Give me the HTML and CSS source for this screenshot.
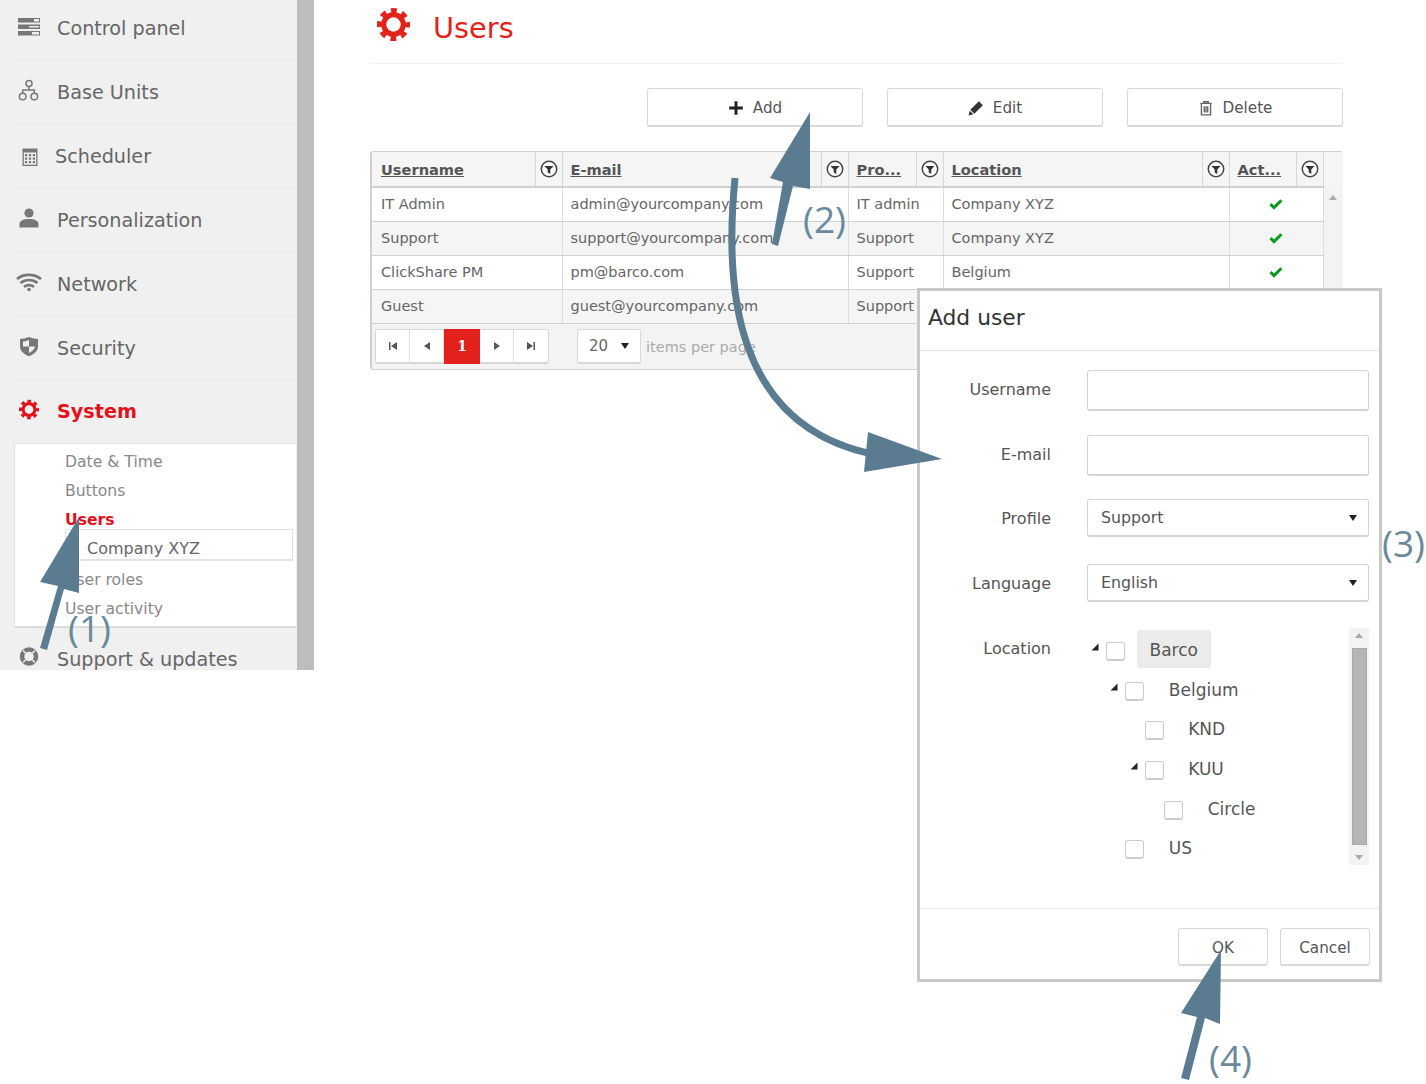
FILE: index.html
```html
<!DOCTYPE html>
<html lang="en">
<head>
  <meta charset="UTF-8">
  <title>Users</title>
  <link rel="stylesheet" href="styles.css">
</head>
<body>
  <svg class="defs" width="0" height="0">
    <symbol id="gear" viewBox="0 0 32 32">
      <circle cx="16" cy="16" r="9.500" fill="none" stroke="currentColor" stroke-width="5"/>
      <circle cx="16" cy="16" r="13.500" fill="none" stroke="currentColor" stroke-width="5" stroke-dasharray="5.600 5" stroke-dashoffset="2.800"/>
    </symbol>
    <symbol id="funnel" viewBox="0 0 18 18">
      <circle cx="9" cy="9" r="7.700" fill="#fff" stroke="#444" stroke-width="1.500"/>
      <path d="M4.400 6h9.200L10.300 9.600V14L7.700 12.400V9.600z" fill="#333"/>
    </symbol>
    <symbol id="check" viewBox="0 0 14 12">
      <path d="M1.500 6.200L5 9.600 12.400 2.200" fill="none" stroke="#0a9a1e" stroke-width="3"/>
    </symbol>
    <symbol id="twist" viewBox="0 0 8 8">
      <path d="M7.500 0.500V7.500H0.500z" fill="#222"/>
    </symbol>
  </svg>

  <div class="page">
    <aside class="sidebar">
      <nav class="nav">
        <a class="nav-item">
          <svg class="nav-icon" viewBox="0 0 27 22"><path d="M4 1h22v4.500H4zM4 7.500h22V12H4zM4 14h22v4.500H4z" fill="#777"/><path d="M20 2h5v2.500h-5zM15 9h10v1.500H15zM18 15h7v2.500h-7z" fill="#eee"/></svg>
          <span>Control panel</span>
        </a>
        <a class="nav-item">
          <svg class="nav-icon" viewBox="0 0 27 22" fill="none" stroke="#777" stroke-width="1.500"><circle cx="15" cy="2.500" r="3"/><circle cx="8.700" cy="15.500" r="3.300"/><circle cx="20.300" cy="15.500" r="3.300"/><path d="M15 5.500v3.500M8.700 12.200V9h11.600v3.200"/></svg>
          <span>Base Units</span>
        </a>
        <a class="nav-item nav-item-tight">
          <svg class="nav-icon" viewBox="0 0 27 22" fill="#777"><path fill-rule="evenodd" d="M8.500 3.500h15V21h-15zM9.800 7.500v12.200h12.400V7.500z"/><path d="M11 9h2.200v2.200H11zM14.900 9h2.200v2.200h-2.200zM18.800 9H21v2.200h-2.200zM11 12.500h2.200v2.200H11zM14.900 12.500h2.200v2.200h-2.200zM18.800 12.500H21v2.200h-2.200zM11 16h2.200v2.200H11zM14.900 16h2.200v2.200h-2.200zM18.800 16H21v2.200h-2.200z"/></svg>
          <span>Scheduler</span>
        </a>
        <a class="nav-item">
          <svg class="nav-icon" viewBox="0 0 27 22" fill="#777"><circle cx="15" cy="4" r="4.600"/><path d="M5.500 18.500v-3.500c0-3 3.500-5 9.500-5s9.500 2 9.500 5v3.500z"/></svg>
          <span>Personalization</span>
        </a>
        <a class="nav-item">
          <svg class="nav-icon" viewBox="0 0 27 22" fill="none" stroke="#777" stroke-width="2.700"><path d="M3 6c6.500-5.500 17-5.500 24 0M6.500 10c5-4 12-4 17 0M10 13.800c3-2 7-2 10 0"/><circle cx="15" cy="16.500" r="1.800" fill="#777" stroke="none"/></svg>
          <span>Network</span>
        </a>
        <a class="nav-item">
          <svg class="nav-icon" viewBox="0 0 27 22"><path d="M15 0c3 1.200 6 2 9 2v7.500c0 4.500-4 7.800-9 9.800-5-2-9-5.300-9-9.800V2c3 0 6-.8 9-2z" fill="#777"/><path d="M15 3v6.500h6c-.5 3-3 5-6 6.500V9.500H9V4.500c2 0 4-.7 6-1.500z" fill="#eee"/></svg>
          <span>Security</span>
        </a>
        <a class="nav-item nav-item-active">
          <svg class="nav-icon nav-icon-gear" viewBox="0 0 27 22"><use href="#gear" x="5" y="-1.500" width="20" height="20"/></svg>
          <span>System</span>
        </a>
        <div class="subnav">
          <a class="subnav-item">Date &amp; Time</a>
          <a class="subnav-item">Buttons</a>
          <a class="subnav-item subnav-item-active">Users</a>
          <div class="subnav-select">Company XYZ</div>
          <a class="subnav-item">User roles</a>
          <a class="subnav-item">User activity</a>
        </div>
        <a class="nav-item nav-item-last">
          <svg class="nav-icon" viewBox="0 0 27 22"><circle cx="15" cy="8.500" r="7" fill="none" stroke="#777" stroke-width="4.500"/><path d="M9 2.500l3 3M21 2.500l-3 3M9 14.500l3-3M21 14.500l-3-3" stroke="#eee" stroke-width="1.500"/></svg>
          <span>Support &amp; updates</span>
        </a>
      </nav>
    </aside>

    <main class="main">
      <header class="page-title">
        <svg class="title-gear"><use href="#gear"/></svg>
        <h1>Users</h1>
      </header>

      <div class="toolbar">
        <button class="btn">
          <svg class="btn-icon" viewBox="0 0 14 14"><path d="M5.700 1h2.600v4.700H13v2.600H8.300V13H5.700V8.300H1V5.700h4.700z" fill="#222"/></svg>
          Add
        </button>
        <button class="btn">
          <svg class="btn-icon" viewBox="0 0 14 14"><path d="M9.500 1l3.500 3.500-7.500 7.500L2 8.500zM1.500 9.300l3.200 3.200L.5 13.500z" fill="#333"/></svg>
          Edit
        </button>
        <button class="btn">
          <svg class="btn-icon" viewBox="0 0 14 14" fill="none" stroke="#666" stroke-width="1.200"><path d="M2 3h10M5 3V1.500h4V3M3 3.500v9.500h8V3.500M5.500 5.500v5.500M7 5.500v5.500M8.500 5.500v5.500"/></svg>
          Delete
        </button>
      </div>

      <div class="grid">
        <table class="grid-table">
          <colgroup>
            <col class="col-user"><col class="col-mail"><col class="col-profile"><col class="col-location"><col class="col-active"><col class="col-scroll">
          </colgroup>
          <thead>
            <tr>
              <th><div class="th-inner"><a>Username</a><span class="filter"><svg><use href="#funnel"/></svg></span></div></th>
              <th><div class="th-inner"><a>E-mail</a><span class="filter"><svg><use href="#funnel"/></svg></span></div></th>
              <th><div class="th-inner"><a>Pro...</a><span class="filter"><svg><use href="#funnel"/></svg></span></div></th>
              <th><div class="th-inner"><a>Location</a><span class="filter"><svg><use href="#funnel"/></svg></span></div></th>
              <th><div class="th-inner"><a>Act...</a><span class="filter"><svg><use href="#funnel"/></svg></span></div></th>
              <th class="th-scroll"></th>
            </tr>
          </thead>
          <tbody>
            <tr>
              <td>IT Admin</td><td>admin@yourcompany.com</td><td>IT admin</td><td>Company XYZ</td>
              <td class="cell-check"><svg><use href="#check"/></svg></td>
              <td class="scroll-cell" rowspan="4"><span class="scroll-up"></span></td>
            </tr>
            <tr class="alt">
              <td>Support</td><td>support@yourcompany.com</td><td>Support</td><td>Company XYZ</td>
              <td class="cell-check"><svg><use href="#check"/></svg></td>
            </tr>
            <tr>
              <td>ClickShare PM</td><td>pm@barco.com</td><td>Support</td><td>Belgium</td>
              <td class="cell-check"><svg><use href="#check"/></svg></td>
            </tr>
            <tr class="alt">
              <td>Guest</td><td>guest@yourcompany.com</td><td>Support</td><td>Company XYZ</td>
              <td class="cell-check"><svg><use href="#check"/></svg></td>
            </tr>
          </tbody>
        </table>
        <div class="pager">
          <div class="pager-group">
            <a class="pager-btn"><svg viewBox="0 0 10 10"><path d="M1 1h1.500v8H1zM9 1v8L3 5z" fill="#555"/></svg></a>
            <a class="pager-btn"><svg viewBox="0 0 10 10"><path d="M8 1v8L2 5z" fill="#555"/></svg></a>
            <span class="pager-current">1</span>
            <a class="pager-btn"><svg viewBox="0 0 10 10"><path d="M2 1v8l6-4z" fill="#555"/></svg></a>
            <a class="pager-btn"><svg viewBox="0 0 10 10"><path d="M9 1H7.500v8H9zM1 1v8l6-4z" fill="#555"/></svg></a>
          </div>
          <div class="pager-size">20<span class="caret"></span></div>
          <span class="pager-label">items per page</span>
        </div>
      </div>
    </main>

    <!-- Add user dialog -->
    <section class="dialog">
      <h2 class="dialog-title">Add user</h2>
      <div class="dialog-body">
        <div class="form-row"><label>Username</label><div class="input"></div></div>
        <div class="form-row"><label>E-mail</label><div class="input"></div></div>
        <div class="form-row form-row-select"><label>Profile</label><div class="input input-select">Support<span class="caret"></span></div></div>
        <div class="form-row form-row-select"><label>Language</label><div class="input input-select">English<span class="caret"></span></div></div>
        <div class="form-row form-row-tree">
          <label>Location</label>
          <div class="tree">
            <div class="tree-list">
              <div class="tree-node"><svg class="twist"><use href="#twist"/></svg><span class="box"></span><span class="tree-text tree-text-on">Barco</span></div>
              <div class="tree-node lvl-1"><svg class="twist"><use href="#twist"/></svg><span class="box"></span><span class="tree-text">Belgium</span></div>
              <div class="tree-node lvl-2"><span class="box"></span><span class="tree-text">KND</span></div>
              <div class="tree-node lvl-2"><svg class="twist"><use href="#twist"/></svg><span class="box"></span><span class="tree-text">KUU</span></div>
              <div class="tree-node lvl-3"><span class="box"></span><span class="tree-text">Circle</span></div>
              <div class="tree-node lvl-1"><span class="box"></span><span class="tree-text">US</span></div>
            </div>
            <div class="tree-scroll">
              <span class="scroll-up"></span>
              <span class="tree-thumb"></span>
              <span class="scroll-down"></span>
            </div>
          </div>
        </div>
      </div>
      <div class="dialog-foot">
        <button class="btn btn-foot">OK</button>
        <button class="btn btn-foot">Cancel</button>
      </div>
    </section>

    <!-- Callouts drawn on top of the screenshot -->
    <svg class="arrows" viewBox="0 0 1426 1084">
      <g fill="#5b7c90">
        <path d="M40 648L47 650 64 589 79 593 79 517 40 582 58 586z"/>
        <path d="M772 244L778 246 793 186 810 189 810 112 770 178 783 182z"/>
        <path d="M1181 1078L1189 1080 1205 1018 1220 1024 1221 950 1181 1013 1197 1017z"/>
        <path d="M942 459L868 432 864 472z"/>
      </g>
      <path d="M735 178C724 290 735 425 872 454" fill="none" stroke="#5b7c90" stroke-width="7"/>
    </svg>
    <span class="callout callout-1">(1)</span>
    <span class="callout callout-2">(2)</span>
    <span class="callout callout-3">(3)</span>
    <span class="callout callout-4">(4)</span>
  </div>
</body>
</html>
```

FILE: styles.css
```css
/* General */
body {
  margin: 0;
  background: #fff;
  font-family: "DejaVu Sans", Verdana, sans-serif;
  color: #666;
}

.defs {
  position: absolute;
}

.page {
  position: relative;
  width: 1426px;
  height: 1084px;
  display: flex;
  align-items: flex-start;
  overflow: hidden;
}

/* Sidebar */
.sidebar {
  flex: none;
  box-sizing: border-box;
  width: 314px;
  height: 670px;
  padding: 0 1px 0 14px;
  background: #f0f0f0;
  border-right: 17px solid #bdbdbd;
  overflow: hidden;
}

.nav {
  margin-top: -4px;
}

.nav-item {
  display: flex;
  align-items: center;
  box-sizing: border-box;
  height: 64px;
  gap: 16px;
  border-bottom: 1px solid #e8e8e8;
  font-size: 19.200px;
  color: #666;
}

.nav-item span {
  padding-top: 2px;
}

.nav-item-tight {
  gap: 14px;
}

.nav-item-active {
  height: 63px;
  color: #e2111a;
  font-weight: bold;
  border-bottom: none;
}

.nav-item-last {
  height: 62px;
  border-bottom: none;
}

.nav-item-active span,
.nav-item-last span {
  padding-top: 0;
}

.nav-icon {
  width: 27px;
  height: 22px;
  flex: none;
  overflow: visible;
}

.nav-icon-gear {
  color: #e2111a;
}

.subnav {
  box-sizing: border-box;
  height: 185px;
  padding-top: 4px;
  background: #fff;
  border-top: 1px solid #e2e2e2;
  border-left: 1px solid #e2e2e2;
  border-bottom: 2px solid #dcdcdc;
}

.subnav-item {
  display: block;
  height: 29px;
  line-height: 29px;
  padding-left: 50px;
  font-size: 15.600px;
  color: #888;
}

.subnav-item-active {
  color: #e2111a;
  font-weight: bold;
}

.subnav-select {
  box-sizing: border-box;
  height: 32px;
  margin: -6px 3px 5px 50px;
  padding-left: 21px;
  line-height: 38px;
  font-size: 16px;
  color: #666;
  border: 1px solid #e2e2e2;
  border-bottom-width: 2px;
}

/* Main */
.main {
  flex: none;
  width: 973px;
  margin-left: 56px;
}

.page-title {
  display: flex;
  align-items: center;
  gap: 23px;
  height: 63px;
  padding-left: 7px;
  border-bottom: 1px solid #f2f2f2;
}

.title-gear {
  width: 33px;
  height: 33px;
  margin-top: -14px;
  color: #e2231a;
}

.page-title h1 {
  margin: -8px 0 0;
  font-size: 28.800px;
  font-weight: normal;
  color: #e2231a;
}

.toolbar {
  display: flex;
  justify-content: flex-end;
  gap: 24px;
  margin-top: 24px;
}

.btn {
  display: flex;
  align-items: center;
  justify-content: center;
  gap: 9px;
  box-sizing: border-box;
  width: 216px;
  height: 39px;
  padding: 1px 0 0;
  background: #fff;
  border: 1px solid #d8d8d8;
  border-bottom-width: 2px;
  border-radius: 3px;
  font-family: inherit;
  font-size: 15.200px;
  color: #555;
}

.btn-icon {
  width: 16px;
  height: 16px;
}

/* Users table */
.grid {
  margin-top: 24px;
  height: 219px;
  box-sizing: border-box;
  background: #f3f3f3;
  border: 1px solid #d0d0d0;
  border-left-width: 2px;
  border-radius: 3px;
}

.grid-table {
  width: 971px;
  table-layout: fixed;
  border-collapse: collapse;
  font-size: 14.500px;
}

.col-user { width: 190px; }
.col-mail { width: 286px; }
.col-profile { width: 95px; }
.col-location { width: 286px; }
.col-active { width: 94px; }
.col-scroll { width: 20px; }

.grid-table th {
  height: 34px;
  padding: 0;
  background: #f5f5f5;
  border-bottom: 2px solid #d0d0d0;
  border-right: 1px solid #d8d8d8;
  font-size: 14.600px;
}

.grid-table th.th-scroll {
  border-bottom: none;
  border-right: none;
}

.th-inner {
  display: flex;
  align-items: center;
  justify-content: space-between;
  height: 34px;
  padding-left: 8px;
  text-align: left;
}

.grid-table th:first-child .th-inner {
  padding-left: 9px;
}

.th-inner a {
  color: #555;
  text-decoration: underline;
}

.filter {
  display: flex;
  align-items: center;
  justify-content: center;
  width: 26px;
  height: 34px;
  border-left: 1px solid #d8d8d8;
}

.filter svg {
  width: 18px;
  height: 18px;
}

.grid-table td {
  height: 32px;
  padding: 0 0 1px 8px;
  background: #fff;
  border-bottom: 1px solid #d0d0d0;
  border-right: 1px solid #dcdcdc;
  white-space: nowrap;
  overflow: hidden;
  color: #666;
}

.grid-table td:first-child {
  padding-left: 9px;
}

.grid-table tr.alt td {
  background: #f5f5f5;
}

.grid-table td.cell-check {
  padding: 0;
  text-align: center;
}

.cell-check svg {
  width: 14px;
  height: 12px;
  margin-bottom: 3px;
  vertical-align: middle;
}

.grid-table td.scroll-cell {
  padding: 4px 0 0;
  vertical-align: top;
  background: #f3f3f3;
  border: none;
}

.scroll-up,
.scroll-down {
  display: block;
  width: 0;
  margin: 4px auto;
  border-left: 4px solid transparent;
  border-right: 4px solid transparent;
}

.scroll-up {
  border-bottom: 5px solid #aaa;
}

.scroll-down {
  border-top: 5px solid #aaa;
}

/* Pager */
.pager {
  display: flex;
  align-items: center;
  height: 45px;
  padding-left: 3px;
}

.pager-group {
  display: flex;
  box-sizing: border-box;
  width: 174px;
  height: 35px;
  background: #fff;
  border: 1px solid #d8d8d8;
  border-bottom-width: 2px;
  border-radius: 3px;
}

.pager-btn {
  display: flex;
  align-items: center;
  justify-content: center;
  box-sizing: border-box;
  width: 34px;
  border-right: 1px solid #e0e0e0;
}

.pager-btn:last-child {
  border-right: none;
}

.pager-btn svg {
  width: 10px;
  height: 10px;
}

.pager-current {
  width: 36px;
  margin: -1px 0 -2px 0;
  background: #e2201c;
  color: #fff;
  font-family: "DejaVu Serif", serif;
  font-weight: bold;
  font-size: 14px;
  line-height: 34px;
  text-align: center;
}

.pager-size {
  display: flex;
  align-items: center;
  justify-content: space-between;
  box-sizing: border-box;
  width: 64px;
  height: 35px;
  margin-left: 28px;
  padding: 0 11px 0 11px;
  background: #fff;
  border: 1px solid #d8d8d8;
  border-bottom-width: 2px;
  border-radius: 3px;
  font-size: 15px;
}

.caret {
  width: 0;
  border-left: 4px solid transparent;
  border-right: 4px solid transparent;
  border-top: 6px solid #222;
}

.pager-label {
  margin-left: 5px;
  font-size: 14.500px;
  color: #aaa;
}

/* Dialog */
.dialog {
  position: absolute;
  left: 917px;
  top: 288px;
  box-sizing: border-box;
  width: 465px;
  height: 694px;
  display: flex;
  flex-direction: column;
  background: #fff;
  border: 3px solid #c8c8c8;
}

.dialog-title {
  margin: 0;
  height: 59px;
  padding-left: 8px;
  line-height: 53px;
  font-size: 21.800px;
  font-weight: normal;
  color: #333;
  border-bottom: 1px solid #e8e8e8;
}

.dialog-body {
  flex: 1;
  padding-top: 19px;
}

.form-row {
  display: flex;
  align-items: center;
  height: 41px;
  margin-bottom: 24px;
}

.form-row label {
  flex: none;
  width: 131px;
  margin-right: 36px;
  padding-bottom: 2px;
  text-align: right;
  font-size: 16px;
  color: #555;
}

.form-row + .form-row-select {
  margin-top: -1px;
}

.form-row-select {
  height: 38px;
  margin-bottom: 27px;
}

.form-row-select + .form-row-select {
  margin-top: 0;
}

.form-row-select label {
  padding-bottom: 0;
}

.input {
  box-sizing: border-box;
  width: 282px;
  height: 100%;
  background: #fff;
  border: 1px solid #d4d4d4;
  border-bottom-width: 2px;
  border-radius: 3px;
}

.input-select {
  display: flex;
  align-items: center;
  justify-content: space-between;
  padding: 0 11px 0 13px;
  font-size: 15.800px;
  color: #555;
}

.form-row-tree {
  align-items: flex-start;
  height: auto;
  margin: -1px 0 0;
}

.form-row-tree label {
  margin-top: 11px;
  padding-bottom: 0;
}

/* Tree */
.tree {
  display: flex;
  justify-content: space-between;
  width: 282px;
  height: 237px;
}

.tree-list {
  padding-top: 1px;
}

.tree-node {
  display: flex;
  align-items: center;
  height: 39.700px;
  padding-left: 19px;
}

.lvl-1 { padding-left: 38.300px; }
.lvl-2 { padding-left: 57.700px; }
.lvl-3 { padding-left: 77.200px; }

.twist {
  flex: none;
  width: 8px;
  height: 8px;
  margin: -3px -9px 0 -15px;
}

.box {
  flex: none;
  box-sizing: border-box;
  width: 19px;
  height: 19px;
  margin: 5px 0 0 0;
  background: #fff;
  border: 1px solid #ccc;
  border-bottom-width: 2px;
  border-radius: 3px;
}

.twist + .box {
  margin-left: 16px;
}

.tree-text {
  padding: 2px 13px 0;
  margin-left: 11.500px;
  line-height: 36px;
  font-size: 17px;
  color: #555;
}

.tree-text-on {
  background: #ebebeb;
  border-radius: 3px;
}

.tree-scroll {
  display: flex;
  flex-direction: column;
  align-items: center;
  justify-content: space-between;
  width: 20px;
  background: #f3f3f3;
}

.tree-thumb {
  width: 15px;
  height: 197px;
  background: #b5b5b5;
  border: 1px solid #a8a8a8;
  box-sizing: border-box;
}

.tree-scroll .scroll-up,
.tree-scroll .scroll-down {
  margin: 5px auto;
}

.dialog-foot {
  display: flex;
  justify-content: flex-end;
  gap: 12px;
  height: 71px;
  padding: 19px 9px 0 0;
  box-sizing: border-box;
  border-top: 1px solid #e8e8e8;
}

.btn-foot {
  width: 90px;
  height: 38px;
  padding-top: 2px;
}

/* Callouts */
.arrows {
  position: absolute;
  left: 0;
  top: 0;
  width: 1426px;
  height: 1084px;
}

.callout {
  position: absolute;
  font-family: "Open Sans", sans-serif;
  font-weight: 400;
  font-size: 37px;
  line-height: 44px;
  color: #6a8a9c;
}

.callout-1 { left: 68px; top: 606px; }
.callout-2 { left: 803px; top: 197px; }
.callout-3 { left: 1382px; top: 521px; }
.callout-4 { left: 1209px; top: 1036px; }
```
